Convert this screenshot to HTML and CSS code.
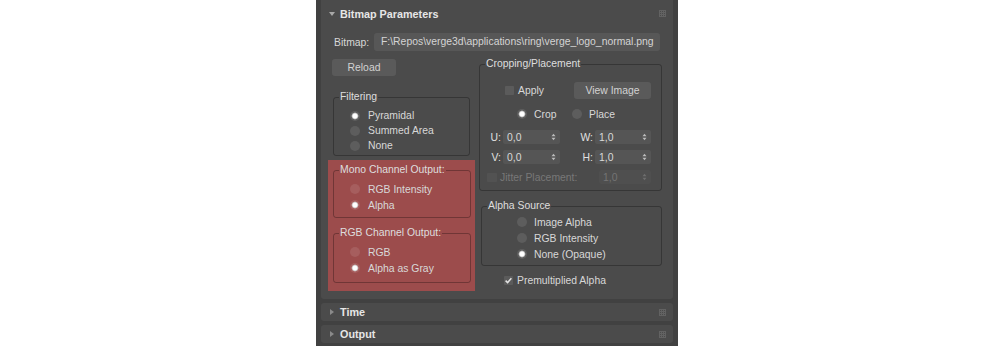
FILE: index.html
```html
<!DOCTYPE html>
<html>
<head>
<meta charset="utf-8">
<link rel="stylesheet" href="styles.css">
</head>
<body>
<div class="panel">
  <div class="rollout main">
    <div class="rhead">
      <span class="tri-down"></span>
      <span class="title">Bitmap Parameters</span>
      <span class="grip"></span>
    </div>
    <div class="bitmap-row">
      <span class="lbl">Bitmap:</span>
      <div class="path">F:\Repos\verge3d\applications\ring\verge_logo_normal.png</div>
    </div>
    <div class="body">
      <div class="col-left">
        <div class="btn reload">Reload</div>
        <fieldset class="grp filtering">
          <legend>Filtering</legend>
          <div class="radio-row"><span class="radio on"></span>Pyramidal</div>
          <div class="radio-row"><span class="radio"></span>Summed Area</div>
          <div class="radio-row"><span class="radio"></span>None</div>
        </fieldset>
        <div class="highlight">
          <fieldset class="grp mono">
            <legend>Mono Channel Output:</legend>
            <div class="radio-row tall"><span class="radio"></span>RGB Intensity</div>
            <div class="radio-row tall"><span class="radio on"></span>Alpha</div>
          </fieldset>
          <fieldset class="grp rgbout">
            <legend>RGB Channel Output:</legend>
            <div class="radio-row tall"><span class="radio"></span>RGB</div>
            <div class="radio-row tall"><span class="radio on"></span>Alpha as Gray</div>
          </fieldset>
        </div>
      </div>
      <div class="col-right">
        <fieldset class="grp crop">
          <legend>Cropping/Placement</legend>
          <div class="apply-row">
            <span class="check"></span><span class="check-text">Apply</span>
            <div class="btn view">View Image</div>
          </div>
          <div class="mode-row">
            <div class="mode"><span class="radio on"></span>Crop</div>
            <div class="mode"><span class="radio"></span>Place</div>
          </div>
          <div class="spin-row first">
            <span class="slbl">U:</span>
            <div class="spin w57"><span>0,0</span><svg class="arrows" width="5" height="8" viewBox="0 0 5 8"><polygon points="0.5,3.3 2.5,0.8 4.5,3.3"/><polygon points="0.5,4.7 2.5,7.2 4.5,4.7"/></svg></div>
            <span class="slbl wide">W:</span>
            <div class="spin w56"><span>1,0</span><svg class="arrows" width="5" height="8" viewBox="0 0 5 8"><polygon points="0.5,3.3 2.5,0.8 4.5,3.3"/><polygon points="0.5,4.7 2.5,7.2 4.5,4.7"/></svg></div>
          </div>
          <div class="spin-row">
            <span class="slbl">V:</span>
            <div class="spin w57"><span>0,0</span><svg class="arrows" width="5" height="8" viewBox="0 0 5 8"><polygon points="0.5,3.3 2.5,0.8 4.5,3.3"/><polygon points="0.5,4.7 2.5,7.2 4.5,4.7"/></svg></div>
            <span class="slbl wide">H:</span>
            <div class="spin w56"><span>1,0</span><svg class="arrows" width="5" height="8" viewBox="0 0 5 8"><polygon points="0.5,3.3 2.5,0.8 4.5,3.3"/><polygon points="0.5,4.7 2.5,7.2 4.5,4.7"/></svg></div>
          </div>
          <div class="jitter-row">
            <span class="check dim"></span><span class="check-text dimtext">Jitter Placement:</span>
            <div class="spin w52 disabled"><span>1,0</span><svg class="arrows" width="5" height="8" viewBox="0 0 5 8"><polygon points="0.5,3.3 2.5,0.8 4.5,3.3"/><polygon points="0.5,4.7 2.5,7.2 4.5,4.7"/></svg></div>
          </div>
        </fieldset>
        <fieldset class="grp alpha">
          <legend>Alpha Source</legend>
          <div class="radio-row tall"><span class="radio"></span>Image Alpha</div>
          <div class="radio-row tall"><span class="radio"></span>RGB Intensity</div>
          <div class="radio-row tall"><span class="radio on"></span>None (Opaque)</div>
        </fieldset>
        <div class="premult">
          <span class="check checked"><svg width="9" height="9" viewBox="0 0 9 9"><path d="M1.6 4.6 L3.6 6.6 L7.4 2.2" fill="none" stroke="#e2e2e2" stroke-width="1.5"/></svg></span><span class="check-text">Premultiplied Alpha</span>
        </div>
      </div>
    </div>
  </div>
  <div class="rollout closed">
    <span class="tri-right"></span>
    <span class="title">Time</span>
    <span class="grip"></span>
  </div>
  <div class="rollout closed">
    <span class="tri-right"></span>
    <span class="title">Output</span>
    <span class="grip"></span>
  </div>
</div>
</body>
</html>
```

FILE: styles.css
```css
html, body {
  margin: 0;
  padding: 0;
  background: #ffffff;
}

body {
  font-family: "Liberation Sans", Arial, sans-serif;
  font-size: 10.4px;
  color: #d8d8d8;
}

.panel {
  margin-left: 316px;
  width: 362px;
  height: 346px;
  box-sizing: border-box;
  padding: 0 5px;
  background: #414141;
  overflow: hidden;
}

.rollout {
  background: #4b4b4b;
  border-radius: 0 0 3px 3px;
}

.rollout.main {
  padding-bottom: 8px;
}

.rhead {
  height: 27px;
  display: flex;
  align-items: center;
}

.tri-down {
  width: 0;
  height: 0;
  margin-left: 8px;
  border-left: 3px solid transparent;
  border-right: 3px solid transparent;
  border-top: 4px solid #a8a8a8;
}

.tri-right {
  width: 0;
  height: 0;
  margin-left: 9px;
  border-top: 3px solid transparent;
  border-bottom: 3px solid transparent;
  border-left: 4px solid #8a8a8a;
}

.title {
  font-weight: bold;
  font-size: 10.8px;
  color: #e6e6e6;
  margin-left: 5px;
}

.closed .title {
  margin-left: 6px;
}

.grip {
  margin-left: auto;
  margin-right: 7px;
  width: 7px;
  height: 7px;
  background-image:
    linear-gradient(90deg, #626262 1px, transparent 1px),
    linear-gradient(#626262 1px, transparent 1px);
  background-size: 2px 2px;
}

.bitmap-row {
  display: grid;
  grid-template-columns: 40px 286px;
  align-items: center;
  margin-top: 6px;
  padding-left: 13px;
  height: 18px;
}

.path {
  height: 18px;
  line-height: 18px;
  background: #575757;
  border-radius: 3px;
  padding-left: 7px;
  white-space: nowrap;
  overflow: hidden;
  color: #d4d4d4;
}

.body {
  display: flex;
  gap: 4px;
  padding: 0 11px 0 7px;
}

.col-left {
  width: 147px;
  display: flex;
  flex-direction: column;
}

.col-right {
  width: 183px;
  display: flex;
  flex-direction: column;
}

.btn {
  background: #5a5a5a;
  border-radius: 3px;
  text-align: center;
  color: #d2d2d2;
  height: 17px;
  line-height: 17px;
}

.reload {
  margin-top: 8px;
  margin-left: 4px;
  width: 64px;
}

fieldset.grp {
  margin: 0;
  padding: 0;
  min-width: 0;
  border: 1px solid rgba(0, 0, 0, 0.28);
  border-radius: 3px;
}

fieldset.grp legend {
  margin-left: 5px;
  padding: 0 1px;
  line-height: 12px;
  height: 12px;
  color: #dedede;
}

.filtering {
  margin-top: 15px !important;
  margin-left: 5px !important;
  width: 137px;
  box-sizing: border-box;
  padding: 5px 0 2px 0 !important;
}

.radio-row {
  height: 15px;
  display: flex;
  align-items: center;
  padding-left: 16px;
}

.radio-row.tall {
  height: 16px;
}

.radio {
  width: 10px;
  height: 10px;
  border-radius: 50%;
  background: rgba(255, 255, 255, 0.1);
  margin-right: 8px;
  flex: none;
}

.radio.on {
  background: radial-gradient(circle, #ffffff 0 2px, #d8d8d8 2.6px, rgba(255, 255, 255, 0.1) 3.8px);
}

.highlight {
  margin-top: 4px;
  background: #9c4c4c;
  padding: 4px 4px 8px 5px;
  display: flex;
  flex-direction: column;
}

.mono {
  padding: 5px 0 4px 0 !important;
}

.rgbout {
  margin-top: 9px !important;
  padding: 5px 0 6px 0 !important;
}

.crop {
  margin-top: 7px !important;
  padding: 0 0 6px 0 !important;
}

.apply-row {
  margin-top: 12px;
  height: 17px;
  display: flex;
  align-items: center;
  padding-left: 25px;
  padding-right: 10px;
}

.check {
  width: 9px;
  height: 9px;
  background: #5b5b5b;
  border-radius: 1px;
  flex: none;
  display: block;
}

.check svg {
  display: block;
}

.check.dim {
  background: #525252;
  width: 10px;
}

.check-text {
  margin-left: 4px;
}

.dimtext {
  color: #787878;
  margin-left: 3px;
}

.view {
  margin-left: auto;
  width: 77px;
}

.mode-row {
  margin-top: 7px;
  height: 16px;
  display: flex;
  align-items: center;
  padding-left: 37px;
}

.mode {
  display: flex;
  align-items: center;
  width: 55px;
}

.mode .radio {
  margin-right: 7px;
}

.spin-row {
  margin-top: 6px;
  height: 14px;
  display: flex;
  align-items: center;
  padding-left: 1px;
}

.spin-row.first {
  margin-top: 8px;
}

.slbl {
  width: 20px;
  text-align: right;
  margin-right: 2px;
  color: #e0e0e0;
}

.slbl.wide {
  width: 33px;
}

.spin {
  height: 14px;
  background: #555555;
  border-radius: 2px;
  display: flex;
  align-items: center;
  padding-left: 4px;
  padding-right: 4px;
  box-sizing: border-box;
}

.spin span {
  flex: 1;
}

.arrows {
  fill: #bdbdbd;
  display: block;
}

.w57 { width: 57px; }
.w56 { width: 56px; }
.w52 { width: 52px; }

.jitter-row {
  margin-top: 6px;
  height: 14px;
  display: flex;
  align-items: center;
  padding-left: 7px;
  padding-right: 10px;
}

.jitter-row .spin {
  margin-left: auto;
}

.spin.disabled {
  background: #4f4f4f;
  color: #747474;
}

.spin.disabled .arrows {
  fill: #6e6e6e;
}

.alpha {
  margin-top: 9px !important;
  margin-left: 2px !important;
  padding: 2px 0 3px 0 !important;
}

.alpha .radio-row {
  padding-left: 35px;
}

.alpha .radio {
  margin-right: 7px;
}

.premult {
  margin-top: 7px;
  height: 14px;
  display: flex;
  align-items: center;
  padding-left: 25px;
}

.rollout.closed {
  margin-top: 4px;
  height: 18px;
  display: flex;
  align-items: center;
  border-radius: 3px;
}
```
